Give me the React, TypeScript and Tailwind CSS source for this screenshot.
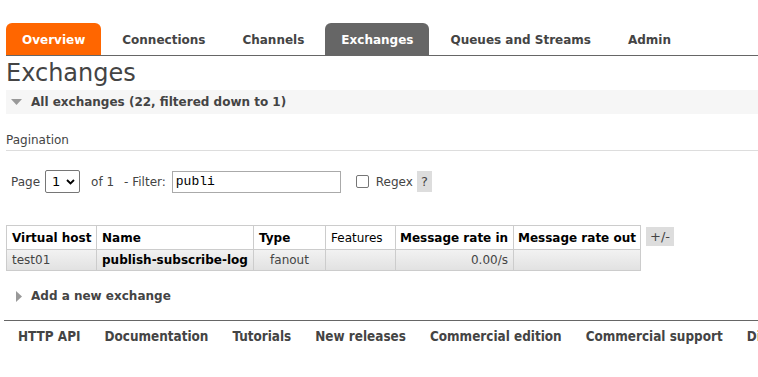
const tabs = [
  { label: "Overview", style: "bg-[#ff6600] text-white" },
  { label: "Connections", style: "text-[#444]" },
  { label: "Channels", style: "text-[#444]" },
  { label: "Exchanges", style: "bg-[#666] text-white" },
  { label: "Queues and Streams", style: "text-[#444]" },
  { label: "Admin", style: "text-[#444]" },
];

const footerLinks = [
  "HTTP API",
  "Documentation",
  "Tutorials",
  "New releases",
  "Commercial edition",
  "Commercial support",
  "Discussions",
];

export default function App() {
  return (
    <div className="h-[377px] w-[758px] overflow-hidden bg-white font-['DejaVu_Sans','Verdana',sans-serif] text-[12px] text-[#444]">
      <div className="pt-[23px]">
        <ul className="ml-[6px] flex gap-[5px] border-b border-[#666]">
          {tabs.map((t) => (
            <li
              key={t.label}
              className={`flex h-[32px] items-center rounded-t-[6px] px-[16px] pt-[2px] font-bold ${t.style}`}
            >
              {t.label}
            </li>
          ))}
        </ul>
      </div>

      <div className="pl-[6px]">
        <h1 className="h-[34px] pt-[2px] text-[24px] leading-[30px] text-[#444]">Exchanges</h1>

        <div className="flex h-[24px] items-center bg-[#f6f6f6] pl-[5px]">
          <svg width="11" height="7" viewBox="0 0 11 7" className="mr-[9px]">
            <polygon points="0,0 11,0 5.5,6" fill="#999" />
          </svg>
          <span className="font-bold">All exchanges (22, filtered down to 1)</span>
        </div>

        <div className="mt-[18px] border-b border-[#ddd] pb-[2px] text-[12px] leading-[16px]">Pagination</div>

        <div className="mt-[19px] flex items-center pl-[5px] text-[12px]">
          <span>Page</span>
          <div className="ml-[5px] flex h-[23px] w-[35px] items-center justify-between rounded-[2px] border border-[#767676] pl-[6px] pr-[4px] text-[13px] text-black">
            <span>1</span>
            <svg width="9" height="6" viewBox="0 0 9 6">
              <polyline points="1,1 4.5,4.5 8,1" fill="none" stroke="#000" strokeWidth="1.8" />
            </svg>
          </div>
          <span className="ml-[11px]">of 1</span>
          <span className="ml-[10px]">- Filter:</span>
          <div className="ml-[6px] flex h-[22px] w-[169px] items-center border border-[#aaa] pl-[3px] font-['Liberation_Mono',monospace] text-[13px] text-black">
            publi
          </div>
          <div className="ml-[15px] h-[13px] w-[13px] rounded-[2px] border border-[#767676]" />
          <span className="ml-[7px]">Regex</span>
          <span className="ml-[4px] flex h-[21px] w-[15px] items-center justify-center bg-[#ddd] text-[13px]">?</span>
        </div>

        <div className="mt-[32px] flex items-start">
          <table className="w-[634px] table-fixed border-collapse whitespace-nowrap text-[12px]">
            <colgroup>
              <col className="w-[90px]" />
              <col className="w-[157px]" />
              <col className="w-[72px]" />
              <col className="w-[70px]" />
              <col className="w-[118px]" />
              <col className="w-[127px]" />
            </colgroup>
            <thead>
              <tr className="h-[24px] bg-white">
                <th className="border border-[#ccc] px-[5px] text-left font-bold text-black">Virtual host</th>
                <th className="border border-[#ccc] px-[5px] text-left font-bold text-black">Name</th>
                <th className="border border-[#ccc] px-[5px] text-left font-bold text-black">Type</th>
                <th className="border border-[#ccc] px-[5px] text-left font-normal text-black">Features</th>
                <th className="border border-[#ccc] px-[4px] text-left font-bold text-black">Message rate in</th>
                <th className="border border-[#ccc] px-[4px] text-left font-bold text-black">Message rate out</th>
              </tr>
            </thead>
            <tbody>
              <tr className="h-[21px] bg-gradient-to-b from-[#f2f2f2] to-[#e1e1e1]">
                <td className="border border-[#ccc] px-[5px]">test01</td>
                <td className="border border-[#ccc] px-[5px] font-bold text-black">publish-subscribe-log</td>
                <td className="border border-[#ccc] px-[5px] text-center">fanout</td>
                <td className="border border-[#ccc] px-[5px]"></td>
                <td className="border border-[#ccc] px-[5px] text-right">0.00/s</td>
                <td className="border border-[#ccc] px-[5px]"></td>
              </tr>
            </tbody>
          </table>
          <span className="ml-[5px] mt-[2px] flex h-[19px] w-[28px] items-center justify-center bg-[#ddd] text-[13px]">+/-</span>
        </div>

        <div className="mt-[16px] flex items-center pl-[10px]">
          <svg width="6" height="11" viewBox="0 0 6 11" className="mr-[9px]">
            <polygon points="0,0 6,5.5 0,11" fill="#999" />
          </svg>
          <span className="font-bold">Add a new exchange</span>
        </div>
      </div>

      <div className="ml-[4px] mt-[15px] border-t border-[#666]">
        <ul className="flex gap-[24px] whitespace-nowrap pl-[14px] pt-[6px] font-['DejaVu_Sans_Condensed','DejaVu_Sans',sans-serif] text-[13.4px] font-bold [font-stretch:condensed]">
          {footerLinks.map((l) => (
            <li key={l}>{l}</li>
          ))}
        </ul>
      </div>
    </div>
  );
}
